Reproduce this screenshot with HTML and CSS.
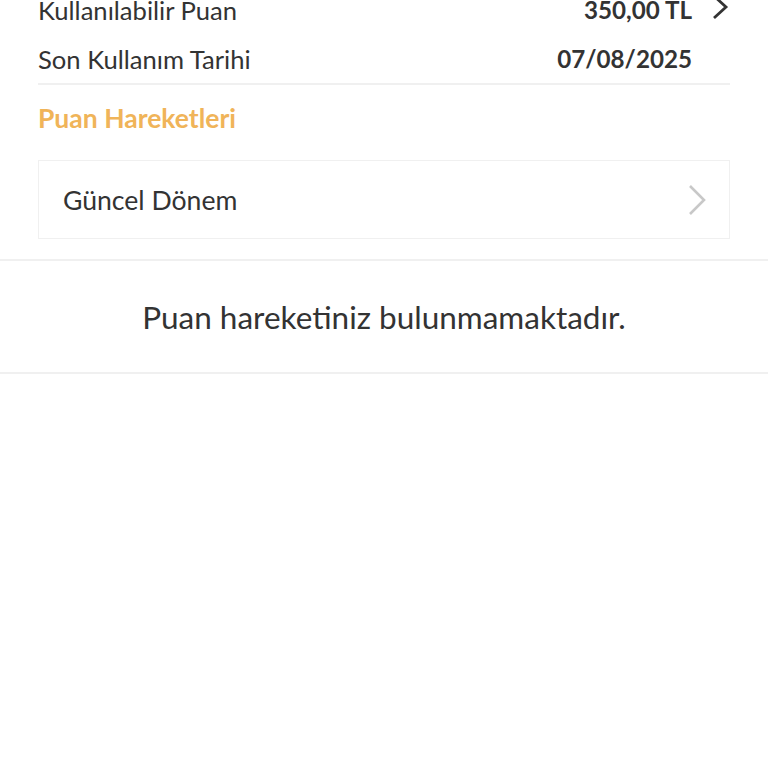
FILE: index.html
```html
<!DOCTYPE html>
<html lang="tr">
<head>
    <meta charset="UTF-8">
    <meta name="viewport" content="width=device-width, initial-scale=1.0">
    <title>Puan</title>
    <link rel="stylesheet" href="styles.css">
</head>
<body>
    <div class="summary">
        <div class="row">
            <span class="label">Kullanılabilir Puan</span>
            <span class="value">350,00 TL</span>
            <svg class="arrow" width="20" height="28" viewBox="0 0 20 28"><path d="M4 3 L16 14 L4 25" fill="none" stroke="#333" stroke-width="2.8"/></svg>
        </div>
        <div class="row">
            <span class="label">Son Kullanım Tarihi</span>
            <span class="value">07/08/2025</span>
            <span class="arrow-space"></span>
        </div>
    </div>

    <h2 class="section-title">Puan Hareketleri</h2>

    <div class="period">
        <span>Güncel Dönem</span>
        <svg width="20" height="32" viewBox="0 0 20 32"><path d="M3 2 L17 16 L3 30" fill="none" stroke="#c8c8c8" stroke-width="2.6"/></svg>
    </div>

    <div class="empty">Puan hareketiniz bulunmamaktadır.</div>
</body>
</html>
```

FILE: styles.css
```css
body {
    font-family: 'Lato', 'Open Sans', sans-serif;
    margin: 0;
    background: #fff;
    color: #333;
}

.summary {
    margin: -15px 38px 0 38px;
    border-bottom: 2px solid #f0f0f0;
}

.row {
    display: flex;
    align-items: center;
    height: 49px;
    font-size: 25.6px;
}

.label {
    flex: 1;
}

.value {
    font-size: 24.2px;
    font-weight: 700;
}

.arrow {
    margin-left: 18px;
    margin-bottom: 6px;
}

.arrow-space {
    width: 38px;
}

.section-title {
    margin: 17px 38px 0 38px;
    font-size: 26.5px;
    font-weight: 700;
    color: #f0b459;
}

.period {
    margin: 26px 38px 0 38px;
    height: 77px;
    border: 1px solid #f0f0f0;
    display: flex;
    align-items: center;
    justify-content: space-between;
    padding: 0 22px 0 24px;
    font-size: 26.6px;
}

.empty {
    margin-top: 20px;
    border-top: 2px solid #f0f0f0;
    border-bottom: 2px solid #f0f0f0;
    height: 111px;
    display: flex;
    align-items: center;
    justify-content: center;
    font-size: 31.5px;
}
```
